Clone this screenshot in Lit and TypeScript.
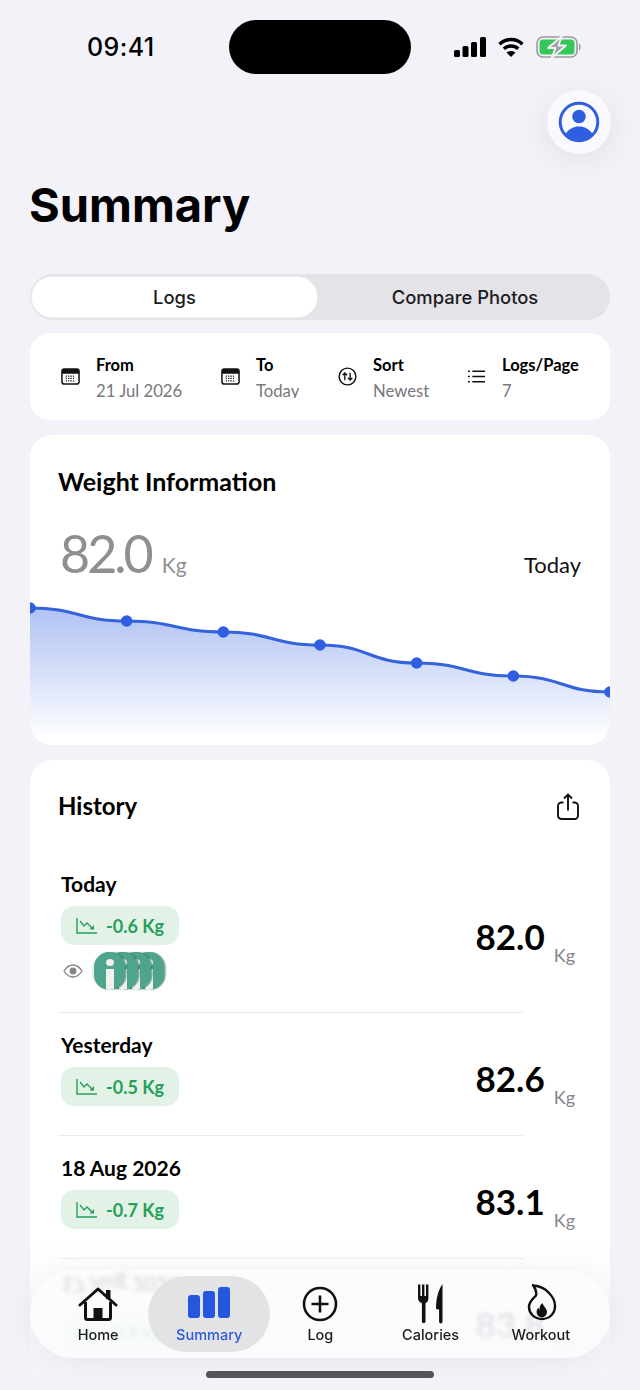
import { LitElement, css, html, svg } from 'lit';
import { customElement } from 'lit/decorators.js';

const points = [18, 31, 42, 55, 73, 86, 102];
const chartW = 580;
const chartH = 146;

function curve() {
  const step = chartW / (points.length - 1);
  let d = `M0 ${points[0]}`;
  for (let i = 1; i < points.length; i++) {
    const x0 = (i - 1) * step;
    const x1 = i * step;
    d += ` C${x0 + step / 2} ${points[i - 1]} ${x1 - step / 2} ${points[i]} ${x1} ${points[i]}`;
  }
  return d;
}

const calendarIcon = html`<svg class="fi" viewBox="0 0 20 20">
  <rect x="1" y="2" width="18" height="16" rx="2.5" fill="none" stroke="#111" stroke-width="1.6" />
  <path d="M1 5a3 3 0 0 1 3-3h12a3 3 0 0 1 3 3v2H1z" fill="#111" />
  <path d="M5 9.5h10M5 12h10M5 14.5h10" stroke="#111" stroke-width="1.3" stroke-dasharray="1.3 1.2" />
</svg>`;

const sortIcon = html`<svg class="fi" viewBox="0 0 20 20" fill="none" stroke="#111">
  <circle cx="10" cy="10" r="8.8" stroke-width="1.5" />
  <path d="M7.2 14V6.4M4.9 8.6l2.3-2.4 2.3 2.4M12.8 6v7.6M10.5 11.4l2.3 2.4 2.3-2.4" stroke-width="1.4" />
</svg>`;

const listIcon = html`<svg class="fi" viewBox="0 0 20 20" fill="none" stroke="#111" stroke-width="1.5">
  <path d="M5.6 4.5H19M5.6 10H19M5.6 15.5H19" />
  <path d="M1 4.5h2M1 10h2M1 15.5h2" />
</svg>`;

const filters = [
  { label: 'From', value: '21 Jul 2026', icon: calendarIcon },
  { label: 'To', value: 'Today', icon: calendarIcon, clip: true },
  { label: 'Sort', value: 'Newest', icon: sortIcon },
  { label: 'Logs/Page', value: '7', icon: listIcon },
];

const logs = [
  { date: 'Today', delta: '-0.6 Kg', weight: '82.0', photos: 4 },
  { date: 'Yesterday', delta: '-0.5 Kg', weight: '82.6', photos: 0 },
  { date: '18 Aug 2026', delta: '-0.7 Kg', weight: '83.1', photos: 0 },
  { date: '17 Aug 2026', delta: '-0.4 Kg', weight: '83.8', photos: 0, ghost: true },
];

const tabs = [
  {
    label: 'Home',
    icon: html`<svg viewBox="0 0 40 40" width="40" height="40">
      <path d="M7.5 18v15.5a2 2 0 0 0 2 2h21a2 2 0 0 0 2-2V18" fill="none" stroke="#111" stroke-width="3" />
      <path d="M2 21 20 5l18 16" fill="none" stroke="#111" stroke-width="3" stroke-linecap="round" stroke-linejoin="round" />
      <path d="M28 6h4.500v9H28z" fill="#111" />
      <path d="M15.500 24h9v12h-9z" fill="#111" />
    </svg>`,
  },
  {
    label: 'Summary',
    active: true,
    icon: html`<svg viewBox="0 0 44 40" width="44" height="40" fill="#2457dd">
      <rect x="1" y="11" width="12" height="23" rx="3" />
      <rect x="16" y="7" width="12" height="27" rx="3" />
      <rect x="31" y="3" width="12" height="31" rx="3" />
    </svg>`,
  },
  {
    label: 'Log',
    icon: html`<svg viewBox="0 0 40 40" width="40" height="40" fill="none" stroke="#111">
      <circle cx="20" cy="20" r="16" stroke-width="2.600" />
      <path d="M20 11.500v17M11.500 20h17" stroke-width="2.600" />
    </svg>`,
  },
  {
    label: 'Calories',
    icon: html`<svg viewBox="0 0 40 40" width="40" height="40" fill="#111">
      <path d="M7 0.500h2.400v11.500h1.600V0.500h2.400v11.500H15V0.500h2.400V14c0 3-1.200 4.500-2.900 5.200V37.500a1.800 1.800 0 0 1-3.600 0V19.200C9 18.500 7 17 7 14z" />
      <path d="M31.500 0v37.800a1.700 1.700 0 0 1-3.400 0V25.500h-1.300C25.500 25.500 24.800 24.500 25 23c.5-7 1-15 6.500-23z" />
    </svg>`,
  },
  {
    label: 'Workout',
    icon: html`<svg viewBox="0 0 40 40" width="40" height="40">
      <path d="M12 1.500C18 2 24 4 28 9c4 4 6 8 6 13 0 8-6 13-13 13-8 0-13-6-13-12 0-6 4-8 7-11.500 1-3.500-1-7.500-3-10.500z" fill="none" stroke="#111" stroke-width="2.400" stroke-linejoin="round" />
      <path d="M21.500 19c.3 3 4.500 5 4.500 9a5.200 5.200 0 0 1-10.400 0c0-2 .8-3.200 1.900-4.200.2 1 .6 1.600 1.400 1.900C18 23.500 19.500 20.500 21.500 19z" fill="#111" />
    </svg>`,
  },
];

@customElement('app-root')
export class AppRoot extends LitElement {
  static styles = css`
    :host {
      display: block;
      position: relative;
      width: 640px;
      height: 1390px;
      overflow: hidden;
      background: #f2f2f8;
      color: #000;
      font-family: 'Lato', 'Noto Sans', sans-serif;
    }
    .status {
      display: grid;
      grid-template-columns: 229px 182px 229px;
      height: 90px;
      padding-top: 20px;
      box-sizing: border-box;
    }
    .time {
      height: 54px;
      padding-left: 87px;
      font: 500 25px/54px 'Inter', sans-serif;
      letter-spacing: 0.4px;
    }
    .island {
      height: 54px;
      border-radius: 27px;
      background: #000;
    }
    .sys {
      display: flex;
      align-items: center;
      height: 54px;
      padding-left: 43px;
      gap: 12px;
    }
    .avatar-row {
      display: flex;
      justify-content: flex-end;
      padding-right: 29px;
    }
    .avatar {
      width: 64px;
      height: 64px;
      border-radius: 50%;
      background: #fafafe;
      box-shadow: 0 6px 34px rgba(0, 0, 0, 0.08);
      display: flex;
      align-items: center;
      justify-content: center;
    }
    h1 {
      margin: 24px 0 0 29px;
      font: 700 47px/54px 'Inter', sans-serif;
    }
    .segment {
      display: flex;
      margin: 42px 30px 0;
      height: 46px;
      padding: 3px 2px;
      box-sizing: border-box;
      border-radius: 23px;
      background: #e3e3e8;
      font: 500 18.400px/40px 'Inter', sans-serif;
    }
    .segment div {
      flex: 1;
      text-align: center;
      color: #1c1c1e;
      padding-left: 5px;
    }
    .segment .on {
      flex: 0 0 285px;
      padding-left: 0;
      background: #fff;
      border-radius: 20px;
      box-shadow: 0 0 0 1px #eeeef3;
    }
    .card {
      margin: 13px 30px 0;
      background: #fff;
      border-radius: 20px;
    }
    .filters {
      display: grid;
      grid-template-columns: 160px 117px 129px auto;
      height: 87px;
      padding-left: 31px;
      align-items: center;
    }
    .filter {
      display: flex;
      align-items: center;
      gap: 16px;
    }
    .fi {
      width: 19px;
      height: 19px;
      flex: none;
    }
    .filter b {
      display: block;
      font-size: 16.500px;
      line-height: 24px;
      font-weight: 700;
    }
    .filter span {
      display: block;
      height: 19px;
      margin: 2px 0 3px;
      font-size: 16.700px;
      line-height: 24px;
      color: #77777c;
    }
    .filter span.clip {
      overflow: hidden;
    }
    .weight {
      margin-top: 15px;
      height: 310px;
      overflow: hidden;
      border-radius: 22px;
    }
    .card-title {
      font-size: 25px;
      font-weight: 700;
      line-height: 30px;
    }
    .weight .card-title {
      padding: 31px 28px 0;
    }
    .now {
      display: flex;
      align-items: baseline;
      padding: 27px 29px 0 30px;
      height: 60px;
      color: #8e8e93;
      line-height: 60px;
    }
    .now strong {
      font-size: 52px;
      font-weight: 400;
      letter-spacing: -3px;
    }
    .now small {
      font-size: 21px;
      margin-left: 11px;
    }
    .now em {
      margin-left: auto;
      font-style: normal;
      font-size: 22px;
      color: #111;
    }
    .chart {
      display: block;
      margin-top: 7px;
    }
    .history {
      margin-top: 15px;
      border-radius: 22px;
      padding: 0 28px 0;
      height: 700px;
    }
    .history-head {
      display: flex;
      justify-content: space-between;
      align-items: center;
      padding-top: 27px;
      height: 38px;
    }
    .history-head svg {
      margin-right: 3px;
    }
    .history-head .card-title {
      font-size: 24px;
    }
    .row {
      display: flex;
      justify-content: space-between;
      align-items: flex-start;
      box-sizing: border-box;
      padding: 19px 7px 0 3px;
      height: 122px;
    }
    .row.first {
      padding-top: 46px;
      height: 187px;
    }
    .date {
      font-size: 21px;
      font-weight: 700;
      line-height: 26px;
    }
    .row.ghost .date {
      transform: scaleY(-1) translateY(6px);
      filter: blur(1px);
    }
    .chip {
      display: inline-flex;
      align-items: center;
      gap: 8px;
      height: 39px;
      margin-top: 9px;
      padding: 0 15px;
      border-radius: 13px;
      background: #e2f2e7;
      color: #27a05a;
      font-size: 18px;
      font-weight: 700;
    }
    .photos {
      display: flex;
      align-items: center;
      margin-top: 7px;
      padding-left: 2px;
      gap: 8px;
    }
    .stack {
      display: flex;
      flex-direction: row-reverse;
      padding: 0 3px;
      border-radius: 19px;
      background: #eeeef0;
    }
    .thumb {
      position: relative;
      width: 31px;
      height: 38px;
      border-radius: 15px;
      background: #4fa48e;
      margin-left: -18px;
      box-shadow: 1.500px 0 1px rgba(30, 100, 85, 0.55);
      overflow: hidden;
    }
    .thumb:last-child {
      margin-left: 0;
    }
    .thumb i {
      position: absolute;
      left: 12px;
      top: 7px;
      width: 8px;
      height: 7px;
      border-radius: 50%;
      background: #f1f1ee;
    }
    .thumb u {
      position: absolute;
      left: 12px;
      top: 17px;
      width: 8px;
      height: 21px;
      background: #f1f1ee;
    }
    .value {
      display: flex;
      gap: 9px;
      margin-top: 24px;
      flex: none;
    }
    .row.first .value {
      margin-top: 43px;
    }
    .value strong {
      font-size: 35px;
      line-height: 44px;
      font-weight: 700;
    }
    .value small {
      font-size: 18px;
      line-height: 20px;
      color: #85858a;
      align-self: flex-end;
      margin-bottom: -7px;
    }
    .divider {
      width: 465px;
      height: 1px;
      background: #ececf0;
    }
    .fade {
      position: absolute;
      left: 0;
      right: 0;
      bottom: 0;
      height: 150px;
      background: linear-gradient(
        rgba(242, 242, 248, 0),
        rgba(242, 242, 248, 0.45) 60%,
        rgba(242, 242, 248, 0.92) 80%,
        rgba(242, 242, 248, 0.97)
      );
    }
    .tabbar {
      position: absolute;
      left: 30px;
      top: 1270px;
      width: 580px;
      height: 88px;
      box-sizing: border-box;
      display: flex;
      padding: 6px 14px 6px 13px;
      border-radius: 44px;
      background: rgba(251, 251, 254, 0.84);
      backdrop-filter: blur(2px);
      box-shadow: 0 2px 30px rgba(0, 0, 0, 0.06);
    }
    .tab {
      flex: 1;
      display: flex;
      flex-direction: column;
      align-items: center;
      border-radius: 38px;
      color: #1c1c1e;
      font: 500 14.500px/18px 'Inter', sans-serif;
      padding-top: 8px;
    }
    .tab svg {
      height: 40px;
      display: block;
    }
    .tab span {
      margin-top: 2px;
    }
    .tab.active {
      flex: 0 0 122px;
      margin: 0 -5px;
      background: #e3e3e6;
      color: #2d5bd8;
    }
    .home-bar {
      position: absolute;
      left: 206px;
      top: 1371px;
      width: 228px;
      height: 7px;
      border-radius: 4px;
      background: #555558;
    }
  `;

  private renderChart() {
    const step = chartW / (points.length - 1);
    const line = curve();
    return html`<svg class="chart" viewBox="0 0 ${chartW} ${chartH}" width=${chartW} height=${chartH}>
      <defs>
        <linearGradient id="area" x1="0" y1="0" x2="0" y2="1">
          <stop offset="0" stop-color="#2f5fe0" stop-opacity="0.38" />
          <stop offset="1" stop-color="#2f5fe0" stop-opacity="0.01" />
        </linearGradient>
      </defs>
      <path d="${line} V${chartH} H0 Z" fill="url(#area)" />
      <path d=${line} fill="none" stroke="#3563dc" stroke-width="3" />
      ${points.map((y, i) => svg`<circle cx=${i * step} cy=${y} r="5.800" fill="#2f5fe0" />`)}
    </svg>`;
  }

  private renderRow(log: (typeof logs)[number]) {
    return html`<div class="row ${log.photos ? 'first' : ''} ${log.ghost ? 'ghost' : ''}">
        <div>
          <div class="date">${log.date}</div>
          <div class="chip">
            <svg width="22" height="20" viewBox="0 0 22 20" fill="none" stroke="#27a05a" stroke-width="1.400">
              <path d="M1 2v15h20" />
              <path d="M4 5l4 5 3-3 6 6" />
              <path d="M13.500 13.500H18V9z" fill="#27a05a" stroke="none" />
            </svg>
            ${log.delta}
          </div>
          ${log.photos
            ? html`<div class="photos">
                <svg width="20" height="14" viewBox="0 0 20 14" fill="none" stroke="#85858a" stroke-width="1.300">
                  <path d="M1 7c2.500-4 5.500-6 9-6s6.500 2 9 6c-2.500 4-5.500 6-9 6s-6.500-2-9-6z" />
                  <circle cx="10" cy="7" r="2.800" fill="#85858a" />
                </svg>
                <div class="stack">
                  ${Array.from({ length: log.photos }, () => html`<div class="thumb"><i></i><u></u></div>`)}
                </div>
              </div>`
            : ''}
        </div>
        <div class="value"><strong>${log.weight}</strong><small>Kg</small></div>
      </div>
      <div class="divider"></div>`;
  }

  render() {
    return html`
      <div class="status">
        <div class="time">09:41</div>
        <div class="island"></div>
        <div class="sys">
          <svg width="32" height="20" viewBox="0 0 32 20" fill="#000">
            <rect x="0" y="13" width="6" height="7" rx="1.500" />
            <rect x="8.500" y="9" width="6" height="11" rx="1.500" />
            <rect x="17" y="5" width="6" height="15" rx="1.500" />
            <rect x="26" y="0" width="6" height="20" rx="1.500" />
          </svg>
          <svg width="26" height="20" viewBox="0 0 26 20" fill="none" stroke="#000" stroke-width="3.400">
            <path d="M1.500 7.200C8 1 18 1 24.500 7.200" />
            <path d="M5.800 11.800c4.200-3.800 10.200-3.800 14.400 0" />
            <path d="M13 20l-4.500-4.600c2.500-2 6.500-2 9 0z" fill="#000" stroke="none" />
          </svg>
          <svg width="46" height="22" viewBox="0 0 46 22">
            <rect x="1" y="1" width="40" height="20" rx="6" fill="none" stroke="#9a9a9e" stroke-width="1.600" />
            <path d="M43 7.500c2 .6 2 6.400 0 7z" fill="#9a9a9e" />
            <rect x="3.500" y="3.500" width="35" height="15" rx="3.500" fill="#35c759" />
            <path d="M26 0 12 12h7.500L15.500 22 30 9.500h-7.500z" fill="#a2a2a6" stroke="#f2f2f8" stroke-width="1.800" stroke-linejoin="round" />
          </svg>
        </div>
      </div>
      <div class="avatar-row">
        <div class="avatar">
          <svg width="42" height="42" viewBox="0 0 42 42">
            <circle cx="21" cy="21" r="18.800" fill="none" stroke="#2f5fe0" stroke-width="3" />
            <circle cx="21" cy="15.500" r="6.800" fill="#2f5fe0" />
            <path d="M7.500 33c3-5 8-7.500 13.500-7.500S31.500 28 34.500 33c-3.500 3.500-8.500 6-13.500 6S11 36.500 7.500 33z" fill="#2f5fe0" />
          </svg>
        </div>
      </div>
      <h1>Summary</h1>
      <div class="segment">
        <div class="on">Logs</div>
        <div>Compare Photos</div>
      </div>
      <div class="card filters">
        ${filters.map(
          f => html`<div class="filter">
            ${f.icon}
            <div><b>${f.label}</b><span class=${f.clip ? 'clip' : ''}>${f.value}</span></div>
          </div>`,
        )}
      </div>
      <div class="card weight">
        <div class="card-title">Weight Information</div>
        <div class="now">
          <strong>82.0</strong><small>Kg</small><em>Today</em>
        </div>
        ${this.renderChart()}
      </div>
      <div class="card history">
        <div class="history-head">
          <div class="card-title">History</div>
          <svg width="22" height="27" viewBox="0 0 22 27" fill="none" stroke="#111" stroke-width="1.900">
            <path d="M6.500 9.500H4.500A3.500 3.500 0 0 0 1 13v9.500A3.500 3.500 0 0 0 4.500 26h13a3.500 3.500 0 0 0 3.500-3.500V13a3.500 3.500 0 0 0-3.500-3.500h-2" />
            <path d="M11 17.500V1.500M7 5.500 11 1.500l4 4" />
          </svg>
        </div>
        ${logs.map(log => this.renderRow(log))}
      </div>
      <div class="fade"></div>
      <div class="tabbar">
        ${tabs.map(
          t => html`<div class="tab ${t.active ? 'active' : ''}">${t.icon}<span>${t.label}</span></div>`,
        )}
      </div>
      <div class="home-bar"></div>
    `;
  }
}
